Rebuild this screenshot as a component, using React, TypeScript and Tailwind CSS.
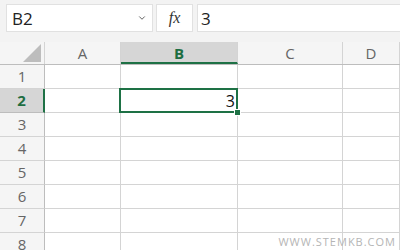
import { ChevronDown } from 'lucide-react';

const columns = [
  { label: 'A', width: 'w-[76px]' },
  { label: 'B', width: 'w-[117px]' },
  { label: 'C', width: 'w-[105px]' },
  { label: 'D', width: 'flex-1' },
];

const rows = [1, 2, 3, 4, 5, 6, 7, 8];

export default function App() {
  return (
    <div
      className="w-[400px] h-[250px] overflow-hidden bg-[#f3f3f3] relative"
      style={{ fontFamily: '"Open Sans", "Noto Sans", sans-serif' }}
    >
      {/* formula bar */}
      <div className="flex items-center h-[42px] pt-[4px] pb-[10px] pl-[6px] gap-[3px]">
        <div className="w-[147px] h-[28px] bg-white border border-[#e1e1e1] flex items-center justify-between pl-[5px] pr-[5px] shrink-0">
          <span className="text-[17px] text-[#222] leading-none">B2</span>
          <ChevronDown className="w-[10px] h-[10px] text-[#444]" strokeWidth={2} />
        </div>
        <div className="w-[37px] h-[28px] bg-white border border-[#e1e1e1] flex items-center justify-center shrink-0">
          <span className="text-[16px] italic text-[#333]" style={{ fontFamily: '"Liberation Serif", serif' }}>fx</span>
        </div>
        <div className="flex-1 h-[28px] bg-white border-y border-l border-[#e1e1e1] flex items-center pl-[3px] ml-[1px]">
          <span className="text-[17px] text-[#222] leading-none">3</span>
        </div>
      </div>

      {/* column headers */}
      <div className="flex h-[23px] bg-[#f5f5f5] border-b border-[#bdbdbd]">
        <div className="w-[45px] border-r border-[#d4d4d4] relative shrink-0">
          <div className="absolute right-[3px] bottom-[2px] w-0 h-0 border-l-[18px] border-l-transparent border-b-[18px] border-b-[#bdbdbd]" />
        </div>
        {columns.map((c) => {
          const sel = c.label === 'B';
          return (
            <div
              key={c.label}
              className={`${c.width} shrink-0 border-r border-[#d4d4d4] flex items-center justify-center text-[15px] ${
                sel ? 'bg-[#d6d6d6] text-[#1e6e42] font-bold border-b-2 border-b-[#1e7145] pt-[2px]' : 'text-[#666]'
              }`}
            >
              {c.label}
            </div>
          );
        })}
      </div>

      {/* grid */}
      {rows.map((r) => {
        const sel = r === 2;
        return (
          <div key={r} className="flex h-[24px] bg-white">
            <div
              className={`w-[45px] shrink-0 border-b flex items-center justify-center text-[15px] ${
                sel
                  ? 'bg-[#d6d6d6] text-[#1e6e42] font-bold border-r-2 border-r-[#1e7145] border-b-[#bdbdbd]'
                  : 'bg-[#f5f5f5] text-[#666] border-r border-r-[#bdbdbd] border-b-[#d4d4d4]'
              }`}
            >
              {r}
            </div>
            {columns.map((c) => {
              const active = sel && c.label === 'B';
              return (
                <div key={c.label} className={`${c.width} shrink-0 border-r border-b border-[#d4d4d4] relative`}>
                  {active && (
                    <>
                      <div className="absolute -left-[2px] -top-[1px] -right-[1px] -bottom-[1px] border-2 border-[#1e7145] flex items-center justify-end pr-[1px]">
                        <span className="text-[16px] text-[#111] leading-none">3</span>
                      </div>
                      <div className="absolute -right-[4px] -bottom-[4px] w-[7px] h-[7px] bg-[#1e7145] border border-white z-10" />
                    </>
                  )}
                </div>
              );
            })}
          </div>
        );
      })}

      <div className="absolute right-[4px] bottom-[3px] text-[11px] tracking-[1px] text-[#b5b5b5] leading-none">
        WWW.STEMKB.COM
      </div>
    </div>
  );
}
